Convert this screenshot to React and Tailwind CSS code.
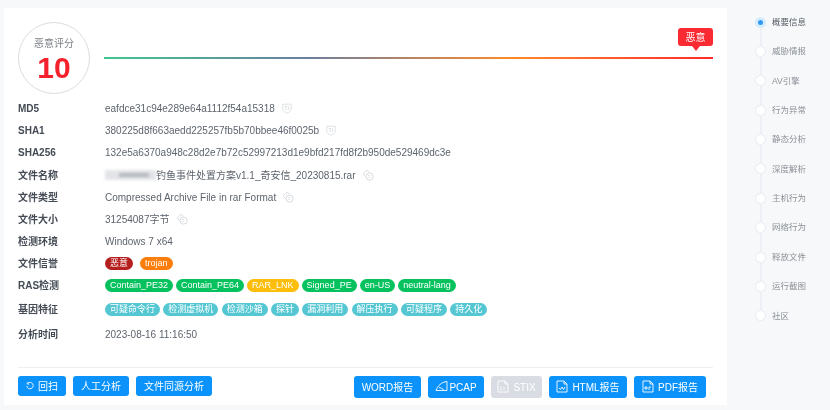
const sans = `font-['Liberation_Sans','Noto_Sans_CJK_SC',sans-serif]`;

const Shield = () => (
  <svg width="10" height="11" viewBox="0 0 10 11" fill="none" stroke="#d5d9dd" strokeWidth="0.8" className="ml-[7px]">
    <path d="M0.8 1.2h8.4v5c0 2-2.2 3.2-4.2 4-2-.8-4.2-2-4.2-4z" />
    <path d="M2.8 3.5h2.4M4 3.5v3.6M6.6 3.4v3.7" />
  </svg>
);

const Copy = () => (
  <svg width="11" height="11" viewBox="0 0 11 11" fill="none" stroke="#d4d8dc" strokeWidth="0.9" className="ml-[7px]">
    <path d="M6.6 2.4 5 .9a1.3 1.3 0 0 0-1.8 0L.9 3.2a1.3 1.3 0 0 0 0 1.8l1.6 1.6" />
    <circle cx="6.6" cy="6.6" r="3.6" />
    <path d="M5 5.5h2.4M5 7.4h2.4" strokeWidth="0.6" />
  </svg>
);

const Row = ({ label, h, children }) => (
  <div className={`flex items-center ${h}`}>
    <div className="w-[87px] shrink-0 text-[10px] font-bold text-[#444b55]">{label}</div>
    <div className="flex items-center text-[10px] text-[#5d646d] whitespace-nowrap">{children}</div>
  </div>
);

const Pill = ({ c, children }) => (
  <span className={`flex items-center h-[13px] rounded-full px-[5px] text-[9px] leading-none text-white ${c}`}>{children}</span>
);

const FileIcon = ({ label }) => (
  <svg width="12" height="13" viewBox="0 0 12 13" fill="none" stroke="currentColor" strokeWidth="0.9" className="mr-[4px] -mt-[2px]">
    <path d="M1 1h7l3 3v8H1z" />
    <path d="M8 1v3h3" />
    {label}
  </svg>
);

const Btn = ({ w, h, c = "bg-[#0b93fb] text-white", children }) => (
  <button className={`flex items-center justify-center rounded-[3px] text-[10px] ${w} ${h} ${c}`}>{children}</button>
);

const nav = ["概要信息", "威胁情报", "AV引擎", "行为异常", "静态分析", "深度解析", "主机行为", "网络行为", "释放文件", "运行截图", "社区"];

export default function App() {
  return (
    <div className={`${sans} relative h-[410px] w-[830px] overflow-hidden bg-[#f7f8f9] blur-[0.4px]`}>
      <div className="flex h-full pl-[4px] pt-[8px]">
        <main className="flex h-[397px] w-[723px] flex-col bg-white pl-[14px] pr-[14px]">
          <div className="mt-[14px] flex h-[72px] items-start">
            <div className="flex h-[72px] w-[72px] shrink-0 flex-col items-center rounded-full border border-[#dcdcdc] pt-[14px]">
              <div className="text-[10px] leading-[14px] text-[#7b8087]">恶意评分</div>
              <div className="mt-[1px] text-[30px] font-bold leading-[32px] text-[#f5222d]">10</div>
            </div>
            <div className="relative ml-[14px] mt-[35px] h-[2px] flex-1 bg-[linear-gradient(90deg,#40c78f_0%,#6a7fa0_33%,#ff8a2a_67%,#ff2a2a_100%)]">
              <div className="absolute bottom-[13px] right-0 flex h-[18px] w-[35px] items-center justify-center rounded-[3px] bg-[#fa2a32] text-[10px] text-white">
                恶意
                <span className="absolute top-[18px] left-1/2 -ml-[4px] border-x-[4px] border-t-[5px] border-x-transparent border-t-[#fa2a32]" />
              </div>
            </div>
          </div>

          <div className="mt-[3px] flex flex-col">
            <Row label="MD5" h="h-[22px]">eafdce31c94e289e64a1112f54a15318<Shield /></Row>
            <Row label="SHA1" h="h-[22px]">380225d8f663aedd225257fb5b70bbee46f0025b<Shield /></Row>
            <Row label="SHA256" h="h-[23px]">132e5a6370a948c28d2e7b72c52997213d1e9bfd217fd8f2b950de529469dc3e</Row>
            <Row label="文件名称" h="h-[22px]">
              <span className="relative block h-[10px] w-[51px] bg-[#e3e4e7] blur-[1.5px]">
                <span className="absolute left-[14px] top-[3px] h-[4px] w-[30px] bg-[#b4b8bd]" />
              </span>
              钓鱼事件处置方案v1.1_奇安信_20230815.rar<Copy />
            </Row>
            <Row label="文件类型" h="h-[22px]">Compressed Archive File in rar Format<Copy /></Row>
            <Row label="文件大小" h="h-[22px]">31254087字节<Copy /></Row>
            <Row label="检测环境" h="h-[22px]">Windows 7 x64</Row>
            <Row label="文件信誉" h="h-[22px]">
              <div className="flex gap-[7px]">
                <Pill c="bg-[#b5201f]">恶意</Pill>
                <Pill c="bg-[#fb7d0c]">trojan</Pill>
              </div>
            </Row>
            <Row label="RAS检测" h="h-[22px]">
              <div className="flex gap-[3px]">
                <Pill c="bg-[#06c25e]">Contain_PE32</Pill>
                <Pill c="bg-[#06c25e]">Contain_PE64</Pill>
                <Pill c="bg-[#fdbd0b]">RAR_LNK</Pill>
                <Pill c="bg-[#06c25e]">Signed_PE</Pill>
                <Pill c="bg-[#06c25e]">en-US</Pill>
                <Pill c="bg-[#06c25e]">neutral-lang</Pill>
              </div>
            </Row>
            <Row label="基因特征" h="h-[27px]">
              <div className="flex gap-[3.3px]">
                {["可疑命令行", "检测虚拟机", "检测沙箱", "探针", "漏洞利用", "解压执行", "可疑程序", "持久化"].map((t) => (
                  <Pill key={t} c="bg-[#55c7d3]">{t}</Pill>
                ))}
              </div>
            </Row>
            <Row label="分析时间" h="h-[23px]">2023-08-16 11:16:50</Row>
          </div>

          <div className="mt-[21px] border-t border-[#eeeff1]" />

          <div className="mt-[8px] flex items-start justify-between pr-[7px]">
            <div className="flex gap-[7px]">
              <Btn w="w-[48px]" h="h-[20px]">
                <svg width="8" height="8" viewBox="0 0 10 10" fill="none" stroke="white" strokeWidth="1.1" className="mr-[4px]">
                  <path d="M2.2 1.6A4 4 0 1 1 1 5" />
                  <path d="M1.6 0.4v2.2h2.2" />
                </svg>
                回扫
              </Btn>
              <Btn w="w-[56px]" h="h-[20px]">人工分析</Btn>
              <Btn w="w-[76px]" h="h-[20px]">文件同源分析</Btn>
            </div>
            <div className="flex gap-[7px]">
              <Btn w="w-[67px]" h="h-[22px]">WORD报告</Btn>
              <Btn w="w-[56px]" h="h-[22px]">
                <svg width="13" height="12" viewBox="0 0 13 12" fill="none" stroke="white" strokeWidth="0.9" className="mr-[1px] -mt-[2px]">
                  <path d="M1 10.5h11V1.5C6.5 2 2.5 6 1 10.5z" />
                  <path d="M4 7.5c2 .3 4 1.3 5 3" />
                </svg>
                PCAP
              </Btn>
              <Btn w="w-[51px]" h="h-[22px]" c="bg-[#d9dde3] text-white">
                <FileIcon label={<path d="M3 7h2M3 9.5h2M7 7v3" />} />
                <span>STIX</span>
              </Btn>
              <Btn w="w-[78px]" h="h-[22px]">
                <FileIcon label={<path d="M3 8l1.5 1.5L6 7l1.5 2.5L9 7" />} />
                <span>HTML报告</span>
              </Btn>
              <Btn w="w-[72px]" h="h-[22px]">
                <FileIcon label={<path d="M3 7h2v2H3zM7 7v3M7 7h2" />} />
                <span>PDF报告</span>
              </Btn>
            </div>
          </div>
        </main>

        <nav className="relative ml-[28px] mt-[7px] flex h-[308px] flex-col justify-between">
          <div className="absolute bottom-[8px] left-[4.5px] top-[8px] w-[2px] bg-[#eff0f5]" />
          {nav.map((t, i) => (
            <div key={t} className="relative flex h-[14px] items-center gap-[6px]">
              {i === 0 ? (
                <span className="flex h-[11px] w-[11px] items-center justify-center rounded-full bg-[#d6ebfd]">
                  <span className="h-[5px] w-[5px] rounded-full bg-[#2f9bf5]" />
                </span>
              ) : (
                <span className="h-[11px] w-[11px] rounded-full border border-[#e9ebf3] bg-white" />
              )}
              <span className={`text-[8.5px] leading-none ${i === 0 ? "text-[#555c66]" : "text-[#8b9097]"}`}>{t}</span>
            </div>
          ))}
        </nav>
      </div>
    </div>
  );
}
